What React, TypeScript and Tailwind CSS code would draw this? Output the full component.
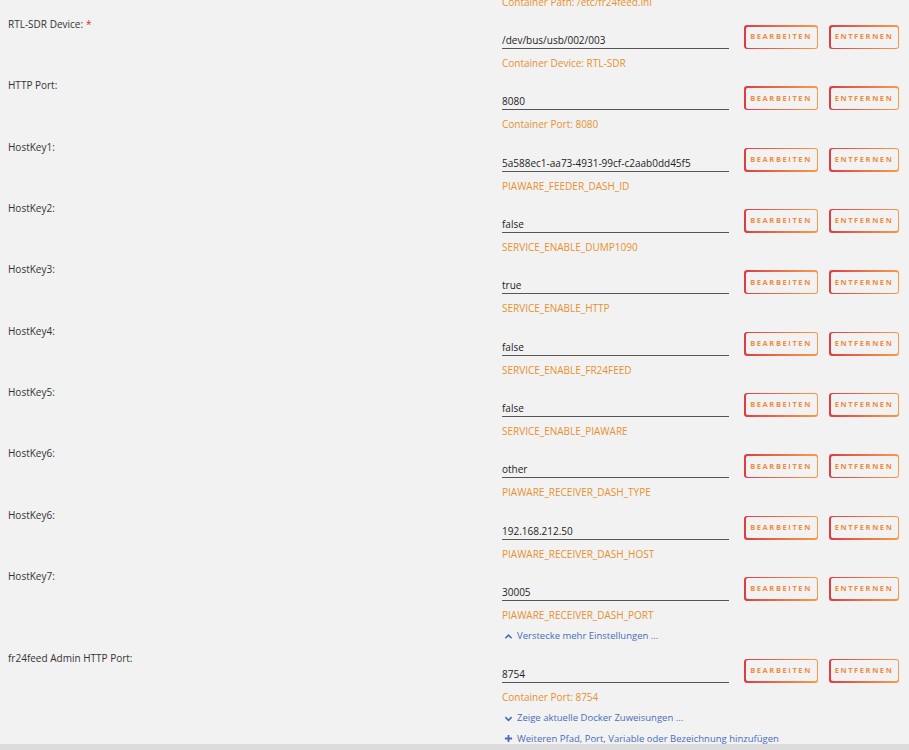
import React from 'react';

interface Row {
    label: string;
    value: string;
    helper: string;
    required?: boolean;
}

const rows: Row[] = [
    { label: 'RTL-SDR Device:', value: '/dev/bus/usb/002/003', helper: 'Container Device: RTL-SDR', required: true },
    { label: 'HTTP Port:', value: '8080', helper: 'Container Port: 8080' },
    { label: 'HostKey1:', value: '5a588ec1-aa73-4931-99cf-c2aab0dd45f5', helper: 'PIAWARE_FEEDER_DASH_ID' },
    { label: 'HostKey2:', value: 'false', helper: 'SERVICE_ENABLE_DUMP1090' },
    { label: 'HostKey3:', value: 'true', helper: 'SERVICE_ENABLE_HTTP' },
    { label: 'HostKey4:', value: 'false', helper: 'SERVICE_ENABLE_FR24FEED' },
    { label: 'HostKey5:', value: 'false', helper: 'SERVICE_ENABLE_PIAWARE' },
    { label: 'HostKey6:', value: 'other', helper: 'PIAWARE_RECEIVER_DASH_TYPE' },
    { label: 'HostKey6:', value: '192.168.212.50', helper: 'PIAWARE_RECEIVER_DASH_HOST' },
    { label: 'HostKey7:', value: '30005', helper: 'PIAWARE_RECEIVER_DASH_PORT' },
];

const GradientButton: React.FC<{ text: string; width: string }> = ({ text, width }) => (
    <div className={`${width} h-[24px] p-[1.5px] rounded-[3px] bg-gradient-to-r from-[#dc3c44] to-[#f79a4a]`}>
        <div className="w-full h-full rounded-[2px] bg-[#f2f2f2] flex items-center justify-center text-[7.5px] font-bold tracking-[1.6px] text-[#f08c42]">
            {text}
        </div>
    </div>
);

const SettingRow: React.FC<{ row: Row }> = ({ row }) => (
    <div className="flex h-[61.33px] pt-[9px]">
        <div className="w-[502px] pl-2 -mt-[9px] leading-[16px] text-[10px] text-[#333]">
            {row.label}
            {row.required && <span className="text-[#e22828] ml-[3px]">*</span>}
        </div>
        <div className="flex flex-col">
            <div className="flex items-start">
                <div className="w-[227px] h-[24px] pt-[7px] leading-[16px] text-[10px] text-[#222] border-b border-[#555] whitespace-nowrap overflow-hidden">
                    {row.value}
                </div>
                <div className="ml-[15px] flex gap-[11px]">
                    <GradientButton text="BEARBEITEN" width="w-[74px]" />
                    <GradientButton text="ENTFERNEN" width="w-[70px]" />
                </div>
            </div>
            <div className="mt-[6px] leading-[16px] text-[10px] text-[#e8912e]">{row.helper}</div>
        </div>
    </div>
);

const LinkRow: React.FC<{ icon: 'up' | 'down' | 'plus'; text: string }> = ({ icon, text }) => (
    <div className="h-[20.67px] pl-[504px] flex items-start">
        <div className="flex items-center gap-[4px] h-[14px] text-[9.5px] text-[#486dba]">
            <svg width="9" height="9" viewBox="0 0 10 10" className="shrink-0">
                {icon === 'up' && <path d="M1.5 7 L5 3.5 L8.5 7" fill="none" stroke="#486dba" strokeWidth="1.8" />}
                {icon === 'down' && <path d="M1.5 3.5 L5 7 L8.5 3.5" fill="none" stroke="#486dba" strokeWidth="1.8" />}
                {icon === 'plus' && <path d="M5 1 V9 M1 5 H9" fill="none" stroke="#486dba" strokeWidth="2" />}
            </svg>
            <span>{text}</span>
        </div>
    </div>
);

export default function App() {
    return (
        <div className="w-[909px] h-[750px] bg-[#f2f2f2] flex flex-col overflow-hidden" style={{ fontFamily: '"Open Sans", "Noto Sans", sans-serif' }}>
            <div className="flex-1 overflow-hidden">
                {/* tail of the previous (scrolled away) entry */}
                <div className="h-[22px] -mt-[6px] pl-[502px] leading-[16px] text-[10px] text-[#e8912e]">
                    Container Path: /etc/fr24feed.ini
                </div>
                {rows.map((r, i) => (
                    <SettingRow key={i} row={r} />
                ))}
                <LinkRow icon="up" text="Verstecke mehr Einstellungen ..." />
                <SettingRow row={{ label: 'fr24feed Admin HTTP Port:', value: '8754', helper: 'Container Port: 8754' }} />
                <LinkRow icon="down" text="Zeige aktuelle Docker Zuweisungen ..." />
                <LinkRow icon="plus" text="Weiteren Pfad, Port, Variable oder Bezeichnung hinzufügen" />
            </div>
            <div className="h-[6px] bg-[#dcdcdc]" />
        </div>
    );
}
